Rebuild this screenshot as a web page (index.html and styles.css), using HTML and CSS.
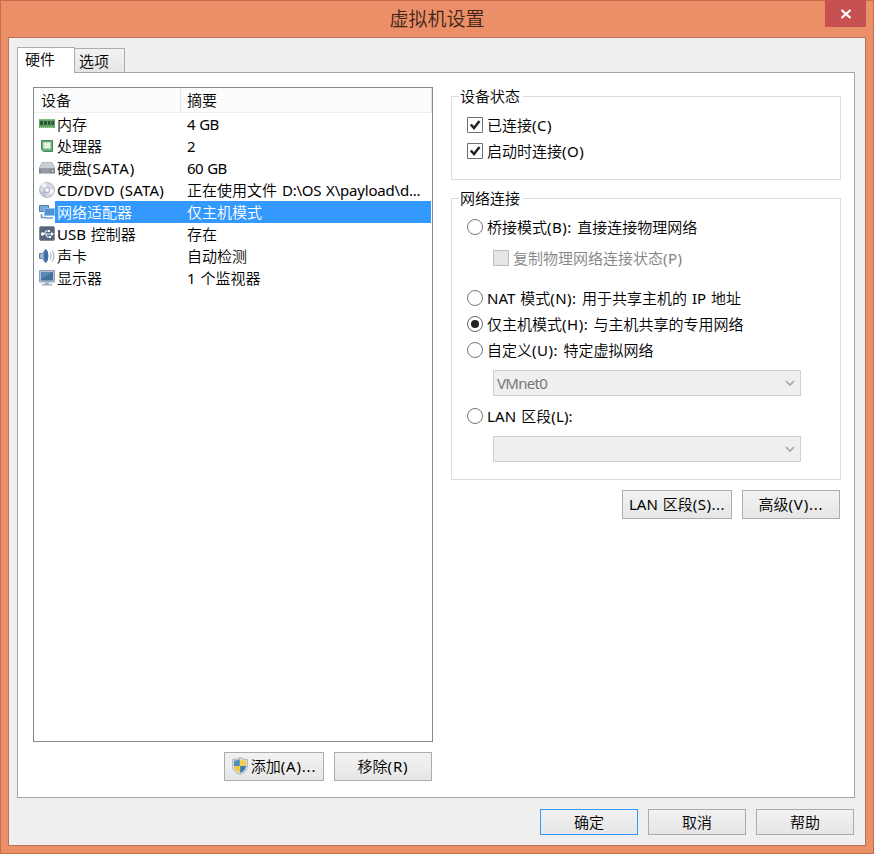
FILE: index.html
```html
<!DOCTYPE html>
<html lang="zh-CN">
<head>
<meta charset="utf-8">
<title>虚拟机设置</title>
<link rel="stylesheet" href="styles.css">
</head>
<body>
<div class="window">
  <header class="titlebar">
    <h1>虚拟机设置</h1>
    <button class="close" aria-label="关闭"><svg width="12" height="10" viewBox="0 0 12 10"><path d="M1.500 1 10.500 9M10.500 1 1.500 9" stroke="#fff" stroke-width="2.300"/></svg></button>
  </header>
  <main class="client">
    <nav class="tabs"><button class="tab active">硬件</button><button class="tab">选项</button></nav>
    <div class="panel">
      <section class="hardware">
        <div class="list">
          <div class="row head"><span class="device">设备</span><span class="summary">摘要</span></div>
          <div class="row"><svg class="icon" viewBox="0 0 16 16"><path d="M0 3h16v9H0z" fill="#5fa465"/><path d="M1 5h3v4H1zm4 0h3v4H5zm4 0h2.500v4H9zm3.500 0H15v4h-2.500z" fill="#315439"/><path d="M0 3.500h16" stroke="#82bd80"/><path d="M1 11.500h14" stroke="#b9dda5" stroke-dasharray="1 1"/></svg><span class="device">内存</span><span class="summary size">4 GB</span></div>
          <div class="row"><svg class="icon" viewBox="0 0 16 16"><path d="M2.500 2.500h11v11h-9l-2-2z" fill="#68ad7d" stroke="#418b59"/><path d="M4.500 4.500h7v6h-7z" fill="#e5f3df" stroke="#b5d9b8"/></svg><span class="device">处理器</span><span class="summary">2</span></div>
          <div class="row"><svg class="icon" viewBox="0 0 16 16"><path d="M3 2.500h10l3 6H0z" fill="#c9ced4" stroke="#a0a6ae" stroke-width=".7"/><path d="M0 8.500h16v5H0z" fill="#7c8490"/><path d="M2 10h9M2 12h9" stroke="#a9b0b9"/><path d="M12.500 10h2v1.500h-2z" fill="#d9eadb"/></svg><span class="device">硬盘<i class="wide">(SATA)</i></span><span class="summary size">60 GB</span></div>
          <div class="row"><svg class="icon" viewBox="0 0 16 16"><circle cx="8" cy="8" r="7.500" fill="#d5d8e1" stroke="#b3b9c4"/><path d="M8 8 2 3a8 8 0 0 1 5-2zM8 8l7-1a7 7 0 0 1-2 6z" fill="#f4f5f8"/><path d="M8 8 1 10a7 7 0 0 0 5 5z" fill="#bbbfd4"/><circle cx="8" cy="8" r="2.500" fill="#f8f8fb" stroke="#a6abb8"/></svg><span class="device cd">CD/DVD (SATA)</span><span class="summary">正在使用文件 <i class="path">D:\OS X\payload\d...</i></span></div>
          <div class="row selected"><svg class="icon" viewBox="0 0 16 16"><path d="M.5 1.500h9v6h-9z" fill="#76acd9" stroke="#4680b5"/><path d="M2.500 10v3.500H7" fill="none" stroke="#6099c9" stroke-width="1.500"/><path d="M5.500 4.500h10v7h-10z" fill="#4f94cf" stroke="#8fc0e8"/><path d="M7 14h7" stroke="#6d9dc8" stroke-width="1.500"/></svg><span class="device">网络适配器</span><span class="summary">仅主机模式</span></div>
          <div class="row"><svg class="icon" viewBox="0 0 16 16"><rect x=".5" y=".5" width="15" height="14" rx="1.500" fill="#53667b" stroke="#8190a0"/><path d="M3 8h9M5 8l2-3h3M6.500 8l2 3h2" fill="none" stroke="#e7edf1" stroke-width="1.100"/><circle cx="3.500" cy="8" r="1.700" fill="#fff"/><path d="m12 6 3 2-3 2zM9 4h2v2H9zM10 10h2v2h-2z" fill="#fff"/></svg><span class="device">USB 控制器</span><span class="summary">存在</span></div>
          <div class="row"><svg class="icon" viewBox="0 0 16 16"><path d="M.5 5.500h3l3-4c3 2 3 11 0 13l-3-4h-3z" fill="#9db6ce" stroke="#5f82a6"/><ellipse cx="7" cy="8" rx="2.200" ry="6.500" fill="#3c6ea2"/><path d="M11 4.500q2.200 3.500 0 7M13 2.500q3.800 5.500 0 11" fill="none" stroke="#9fb9d3" stroke-width="1.200"/></svg><span class="device">声卡</span><span class="summary">自动检测</span></div>
          <div class="row"><svg class="icon" viewBox="0 0 16 16"><path d="M.5.500h15v11.500H.5z" fill="#b5c1cf" stroke="#91a0b2"/><path d="M2 2h12v8.500H2z" fill="#416f9f"/><path d="M2 2h12L2 9z" fill="#5e8ab5"/><path d="M6 12.500h4V14H6zM3 14h10v1.500H3z" fill="#a1adba"/></svg><span class="device">显示器</span><span class="summary">1 个监视器</span></div>
        </div>
        <div class="actions">
          <button class="button add"><svg width="16" height="18" viewBox="0 0 16 18"><path d="M8 .5C6 2 3 2.500.7 2.500V9c0 4 3 7 7.300 8.500C12.300 16 15.300 13 15.300 9V2.500C13 2.500 10 2 8 .5z" fill="#dfe5ea" stroke="#a5b1bd"/><path d="M7.800 2Q5 3.500 2 3.800V9h5.800z" fill="#4b8cbd"/><path d="M8.200 2Q11 3.500 14 3.800V9H8.200z" fill="#f4ce4a"/><path d="M2 9h5.800v7Q2.500 14 2 9z" fill="#efca3d"/><path d="M8.200 9H14q-.5 5-5.800 7z" fill="#3978ab"/></svg><span>添加<i class="dots">(A)...</i></span></button>
          <button class="button">移除<i class="wide">(R)</i></button>
        </div>
      </section>
      <section class="settings">
        <div class="group status">
          <h2>设备状态</h2>
          <label class="option"><svg class="mark" viewBox="0 0 16 16"><path d="M.5.5h15v15H.5z" fill="#fff" stroke="#707070"/><path d="m3.800 7.500 3.200 3.500 5.500-7" fill="none" stroke="#222" stroke-width="2.500"/></svg><span>已连接<i>(C)</i></span></label>
          <label class="option"><svg class="mark" viewBox="0 0 16 16"><path d="M.5.5h15v15H.5z" fill="#fff" stroke="#707070"/><path d="m3.800 7.500 3.200 3.500 5.500-7" fill="none" stroke="#222" stroke-width="2.500"/></svg><span>启动时连接<i>(O)</i></span></label>
        </div>
        <div class="group network">
          <h2>网络连接</h2>
          <label class="option"><svg class="mark" viewBox="0 0 16 16"><circle cx="8" cy="8" r="7.500" fill="#fff" stroke="#777"/></svg><span>桥接模式<i>(B): </i>直接连接物理网络</span></label>
          <label class="option nested"><svg class="mark" viewBox="0 0 16 16"><path d="M.5.5h15v15H.5z" fill="#e6e6e6" stroke="#bcbcbc"/></svg><span>复制物理网络连接状态<i>(P)</i></span></label>
          <label class="option nat"><svg class="mark" viewBox="0 0 16 16"><circle cx="8" cy="8" r="7.500" fill="#fff" stroke="#777"/></svg><span>NAT 模式<i>(N): </i>用于共享主机的 IP 地址</span></label>
          <label class="option"><svg class="mark" viewBox="0 0 16 16"><circle cx="8" cy="8" r="7.500" fill="#fff" stroke="#666"/><circle cx="8" cy="8" r="4" fill="#222"/></svg><span>仅主机模式<i>(H): </i>与主机共享的专用网络</span></label>
          <label class="option"><svg class="mark" viewBox="0 0 16 16"><circle cx="8" cy="8" r="7.500" fill="#fff" stroke="#777"/></svg><span>自定义<i>(U): </i>特定虚拟网络</span></label>
          <div class="select"><span>VMnet0</span><svg width="10" height="7" viewBox="0 0 10 7"><path d="m1 1 4 4 4-4" fill="none" stroke="#a6a6a6" stroke-width="1.700"/></svg></div>
          <label class="option lan"><svg class="mark" viewBox="0 0 16 16"><circle cx="8" cy="8" r="7.500" fill="#fff" stroke="#777"/></svg><span class="lan-name">LAN 区段(L):</span></label>
          <div class="select second"><span></span><svg width="10" height="7" viewBox="0 0 10 7"><path d="m1 1 4 4 4-4" fill="none" stroke="#a6a6a6" stroke-width="1.700"/></svg></div>
        </div>
        <div class="actions">
          <button class="button segments">LAN 区段<i>(S)...</i></button>
          <button class="button">高级<i class="dots">(V)...</i></button>
        </div>
      </section>
    </div>
    <footer><button class="button primary">确定</button><button class="button">取消</button><button class="button">帮助</button></footer>
  </main>
</div>
</body>
</html>
```
FILE: styles.css
```css
* { box-sizing: border-box; }
body { margin: 0; }
body, button { font: 15px/22px "Noto Sans", "Noto Sans CJK SC DemiLight", "Noto Sans CJK SC Light", "Noto Sans CJK SC", sans-serif; color: #000; word-spacing: 1px; }
i { font-style: normal; letter-spacing: .5px; }
svg { display: block; flex: none; }
h1, h2 { margin: 0; font-weight: 400; }
.window { width: 874px; height: 854px; padding: 0 7px 7px; background: #eb8f68; border: 1px solid #c66e49; }
.titlebar { height: 36px; position: relative; text-align: center; }
h1 { font-size: 19px; line-height: 36px; color: #432319; }
.close { position: absolute; top: -1px; right: 0; width: 41px; height: 27px; border: 0; padding: 0; background: #c75050; display: grid; place-items: center; }
.client { height: 809px; padding: 9px 10px 0 8px; background: #efefef; border: 1px solid #b97457; }
.tabs { height: 25px; display: flex; align-items: flex-end; }
.tab { height: 24px; width: 50px; padding: 0 0 0 4px; text-align: left; background: linear-gradient(#f2f2f2, #e6e6e6); border: 1px solid #acacac; border-left: 0; border-bottom: 0; }
.tab.active { width: 58px; height: 26px; padding: 0 0 4px 7px; margin-bottom: -1px; background: #fff; border-left: 1px solid #acacac; position: relative; }
.panel { width: 838px; height: 726px; background: #fff; border: 1px solid #a6a6a6; display: flex; gap: 18px; padding: 14px 13px 0 15px; }
.hardware { width: 400px; }
.list { height: 655px; border: 1px solid #828790; }
.row { display: flex; height: 22px; align-items: center; width: 397px; white-space: nowrap; padding-left: 5px; }
.device { width: 132px; padding-left: 2px; }
.cd { letter-spacing: .2px; }
.wide { letter-spacing: .9px; }
.dots { letter-spacing: .8px; }
.path { letter-spacing: -.2px; }
.size { letter-spacing: -.6px; }
.summary { flex: 1; }
.icon { width: 16px; height: 16px; }
.head { height: 25px; width: 398px; padding-left: 0; background: #fcfcfc; border-bottom: 1px solid #eee; }
.head .device { width: 147px; height: 24px; line-height: 25px; padding-left: 7px; border-right: 1px solid #e5e5e5; }
.head .summary { padding-left: 6px; line-height: 25px; border-right: 1px solid #e5e5e5; }
.selected { background: linear-gradient(90deg, #fff 21px, #3399ff 21px); color: #fff; }
.actions { display: flex; justify-content: flex-end; gap: 10px; margin-top: 10px; padding-right: 1px; }
.button { width: 98px; height: 29px; padding: 0 0 1px; border: 1px solid #acacac; background: linear-gradient(#f2f2f2, #e6e6e6); display: flex; align-items: center; justify-content: center; white-space: nowrap; }
.add { width: 100px; gap: 3px; }
.settings { width: 390px; padding-top: 9px; }
.group { border: 1px solid #dcdcdc; padding-left: 15px; }
.group h2 { width: 64px; height: 22px; margin: -12px 0 5px -8px; padding-left: 1px; font-size: 15px; line-height: 22px; background: #fff; }
.status { height: 84px; }
.network { height: 282px; margin-top: 18px; }
.option { display: flex; align-items: center; height: 26px; gap: 4px; white-space: nowrap; }
.nested { margin: 5px 0 0 26px; color: #838383; }
.nat { margin-top: 14px; }
.mark { width: 16px; height: 16px; }
.select { width: 308px; height: 26px; margin: 7px 0 0 26px; border: 1px solid #d0d0d0; background: #efefef; color: #777; padding: 0 5px 0 3px; display: flex; align-items: center; justify-content: space-between; letter-spacing: -.7px; }
.lan { margin-top: 7px; }
.lan-name { letter-spacing: .1px; }
.settings .actions { margin-top: 10px; }
.segments { width: 110px; }
footer { display: flex; justify-content: flex-end; gap: 10px; padding: 11px 1px 0 0; }
footer .button { width: 98px; height: 26px; }
.primary { border-color: #3399ff; }
```
